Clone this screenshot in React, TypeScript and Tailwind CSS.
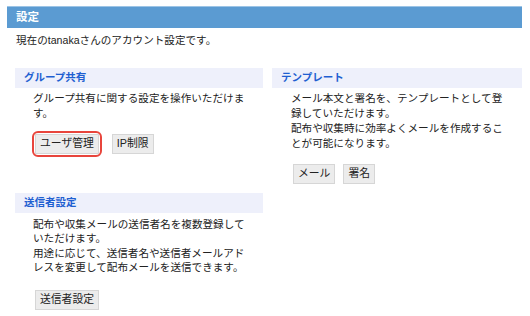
import React from "react";

const FONT = { fontFamily: '"Liberation Sans", "Noto Sans CJK JP", sans-serif' };

function SectionHead({ title }: { title: string }) {
  return (
    <div className="flex h-[20px] items-center bg-[#eef0fb] pl-[9px] text-[10.5px] font-bold text-[#1f5fd1]">
      {title}
    </div>
  );
}

function Btn({ label, outlined }: { label: string; outlined?: boolean }) {
  return (
    <span className="relative inline-flex">
      <button className="flex h-[20px] items-center border border-[#d6d6d6] bg-[#ececec] px-[4px] text-[10.8px] leading-none text-[#222]">
        {label}
      </button>
      {outlined && (
        <span className="pointer-events-none absolute -inset-[3px] rounded-[6px] border-2 border-[#e8453c]" />
      )}
    </span>
  );
}

export default function App() {
  return (
    <div className="min-h-[316px] w-[530px] bg-white px-[7px] pt-[6px] text-[#222]" style={FONT}>
      {/* Title bar */}
      <div className="flex h-[22px] w-[515px] items-center border-t border-[#9cc4e6] bg-[#5b9bd2] pl-[9px] text-[11.5px] font-bold text-white">
        設定
      </div>
      <p className="mt-[5px] pl-[9px] text-[10.6px] leading-[14.5px]">現在のtanakaさんのアカウント設定です。</p>

      <div className="mt-[20px] ml-[8px] grid grid-cols-[248px_250px] gap-x-[9px]">
        {/* Left column */}
        <div className="flex flex-col">
          <section>
            <SectionHead title="グループ共有" />
            <p className="mt-[3px] w-[216px] pl-[18px] text-[10.6px] leading-[15px] box-content">
              グループ共有に関する設定を操作いただけます。
            </p>
            <div className="mt-[13px] flex gap-[13px] pl-[20px]">
              <Btn label="ユーザ管理" outlined />
              <Btn label="IP制限" />
            </div>
          </section>

          <section className="mt-[39px]">
            <SectionHead title="送信者設定" />
            <p className="mt-[4px] w-[216px] pl-[18px] text-[10.6px] leading-[14.5px] box-content">
              配布や収集メールの送信者名を複数登録していただけます。
              <br />
              用途に応じて、送信者名や送信者メールアドレスを変更して配布メールを送信できます。
            </p>
            <div className="mt-[15px] flex pl-[20px]">
              <Btn label="送信者設定" />
            </div>
          </section>
        </div>

        {/* Right column */}
        <section>
          <SectionHead title="テンプレート" />
          <p className="mt-[3px] w-[218px] pl-[19px] text-[10.6px] leading-[15px] box-content">
            メール本文と署名を、テンプレートとして登録していただけます。
            <br />
            配布や収集時に効率よくメールを作成することが可能になります。
          </p>
          <div className="mt-[13px] flex gap-[8px] pl-[21px]">
            <Btn label="メール" />
            <Btn label="署名" />
          </div>
        </section>
      </div>
    </div>
  );
}
